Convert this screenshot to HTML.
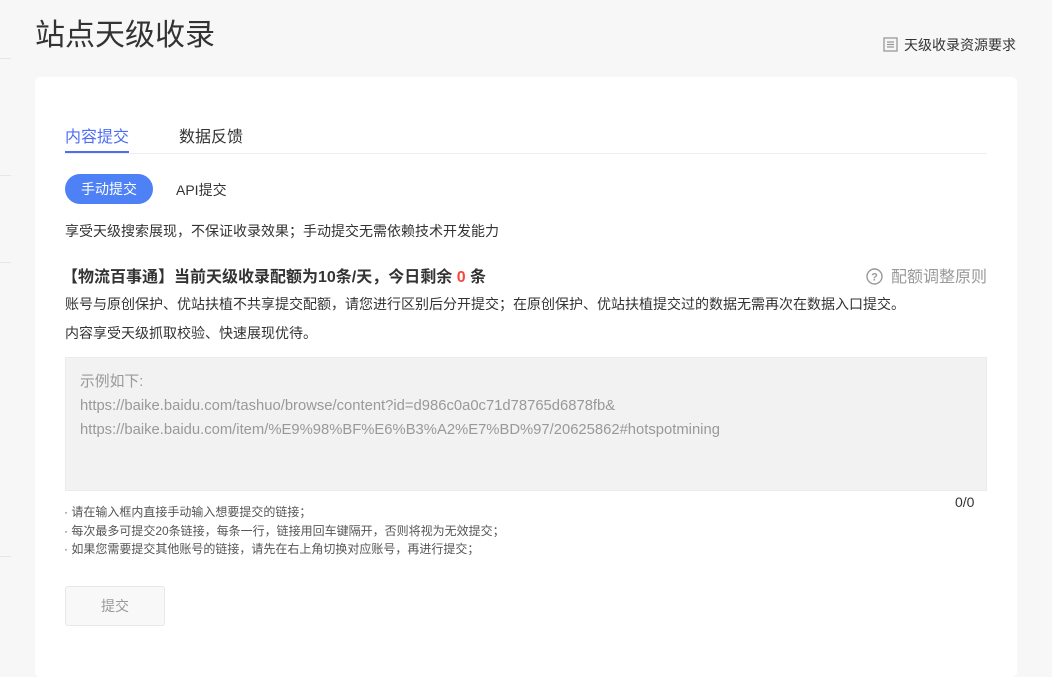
<!DOCTYPE html>
<html><head><meta charset="utf-8"><style>
*{margin:0;padding:0;box-sizing:border-box}
body{width:1052px;height:646px;overflow:hidden;background:#f7f7f7;font-family:"Liberation Sans","Noto Sans CJK SC",sans-serif;color:#333;position:relative}
.a{position:absolute;white-space:nowrap}
.ln{position:absolute;left:0;width:11px;height:1px;background:#e6e6e6}
.card{position:absolute;left:35px;top:77px;width:982px;height:600px;background:#fff;border-radius:5px}
</style></head><body>
<div class="ln" style="top:58px"></div><div class="ln" style="top:175px"></div><div class="ln" style="top:262px"></div><div class="ln" style="top:556px"></div>
<div class="a" style="left:35px;top:10px;font-size:30px;color:#333">站点天级收录</div>
<div class="a" style="left:883px;top:37px;font-size:14px;color:#333;line-height:16px">
<svg width="15" height="15" viewBox="0 0 15 15" style="vertical-align:-2px;margin-right:6px"><rect x="1" y="1" width="13" height="13" fill="none" stroke="#999" stroke-width="1.3"/><path d="M4 5H11M4 7.5H11M4 10H11" stroke="#999" stroke-width="1.2"/></svg>天级收录资源要求</div>
<div class="card"></div>
<div class="a" style="left:65px;top:123px;font-size:16px;color:#4e6ef2">内容提交</div>
<div class="a" style="left:179px;top:123px;font-size:16px;color:#333">数据反馈</div>
<div style="position:absolute;left:65px;top:153px;width:922px;height:1px;background:#eee"></div>
<div style="position:absolute;left:65px;top:151px;width:64px;height:2px;background:#4e6ef2"></div>
<div class="a" style="left:65px;top:174px;width:88px;height:30px;border-radius:15px;background:#4e80f6;color:#fff;font-size:14px;line-height:30px;text-align:center">手动提交</div>
<div class="a" style="left:176px;top:180px;font-size:14px">API提交</div>
<div class="a" style="left:65px;top:221px;font-size:14px">享受天级搜索展现，不保证收录效果；手动提交无需依赖技术开发能力</div>
<div class="a" style="left:62px;top:263px;font-size:16px;font-weight:bold">【物流百事通】当前天级收录配额为10条/天，今日剩余 <span style="color:#f5483b">0</span> 条</div>
<div class="a" style="left:866px;top:268px;font-size:16px;color:#999;line-height:20px"><svg width="17" height="17" viewBox="0 0 17 17" style="vertical-align:-3px;margin-right:8px"><circle cx="8.5" cy="8.5" r="7.5" fill="none" stroke="#999" stroke-width="1.4"/><text x="8.5" y="12.5" font-size="11" text-anchor="middle" fill="#999" font-family="Liberation Sans" font-weight="bold">?</text></svg>配额调整原则</div>
<div class="a" style="left:65px;top:294px;font-size:14px">账号与原创保护、优站扶植不共享提交配额，请您进行区别后分开提交；在原创保护、优站扶植提交过的数据无需再次在数据入口提交。</div>
<div class="a" style="left:65px;top:323px;font-size:14px">内容享受天级抓取校验、快速展现优待。</div>
<div style="position:absolute;left:65px;top:357px;width:922px;height:134px;background:#f2f2f2;border:1px solid #ebebeb"></div>
<div class="a" style="left:80px;top:370px;font-size:14.8px;color:#999;line-height:24px">示例如下:<br>https://baike.baidu.com/tashuo/browse/content?id=d986c0a0c71d78765d6878fb&amp;<br>https://baike.baidu.com/item/%E9%98%BF%E6%B3%A2%E7%BD%97/20625862#hotspotmining</div>
<div class="a" style="left:955px;top:494px;font-size:14px">0/0</div>
<div class="a" style="left:64px;top:503px;font-size:12px;color:#555;line-height:18.5px">· 请在输入框内直接手动输入想要提交的链接；<br>· 每次最多可提交20条链接，每条一行，链接用回车键隔开，否则将视为无效提交；<br>· 如果您需要提交其他账号的链接，请先在右上角切换对应账号，再进行提交；</div>
<div class="a" style="left:65px;top:586px;width:100px;height:40px;background:#f8f8f8;border:1px solid #e8e8e8;border-radius:3px;color:#999;font-size:14px;line-height:38px;text-align:center">提交</div>
</body></html>
